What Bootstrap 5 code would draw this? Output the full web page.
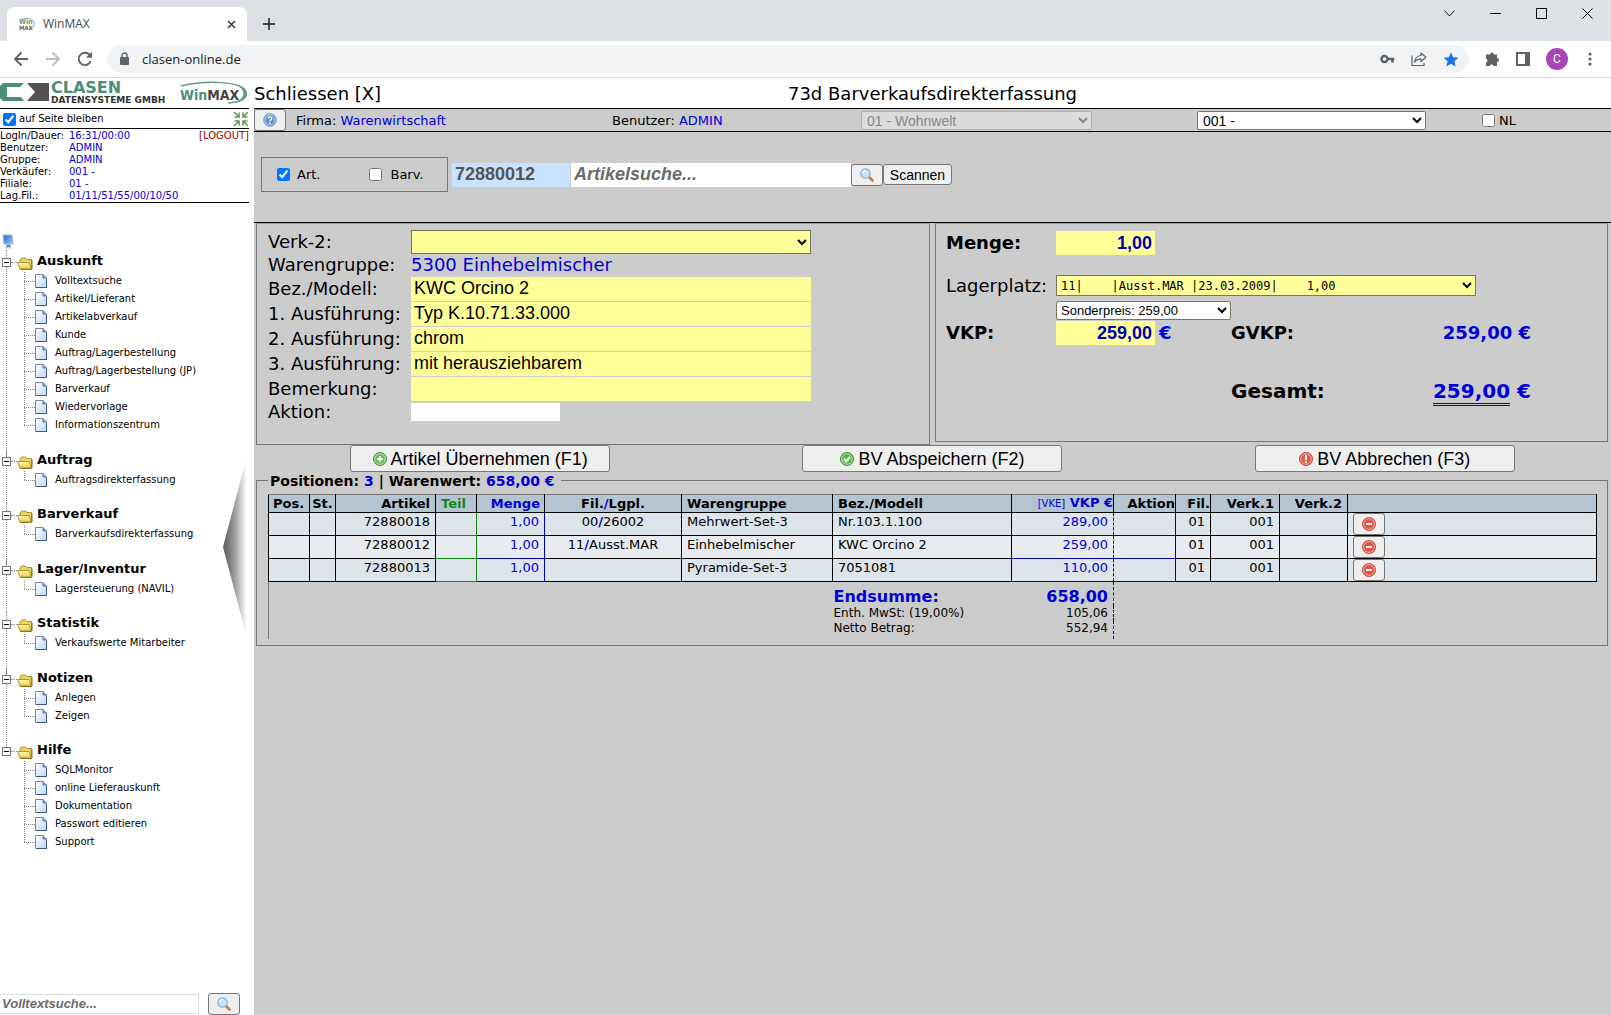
<!DOCTYPE html>
<html lang="de">
<head>
<meta charset="utf-8">
<meta name="viewport" content="width=device-width, initial-scale=1">
<title>WinMAX</title>
<link href="https://cdn.jsdelivr.net/npm/bootstrap@5.3.0/dist/css/bootstrap.min.css" rel="stylesheet">
<style>
  body { font-family: Verdana, "DejaVu Sans", sans-serif; font-size: 13px; line-height: 16px; color: #000; background: #fff; }
  a { color: inherit; text-decoration: none; }
  .blue { color: #0000d8; }
  button, input, select { font-family: Arial, "Liberation Sans", sans-serif; color: #000; }
  input[type=checkbox] { width: 13px; height: 13px; margin: 0; flex: none; }

  /* browser window */
  .tabstrip { height: 41px; background: #dee1e6; padding: 7px 0 0 7px; }
  .tab-card { width: 240px; height: 34px; background: #fff; border-radius: 8px 8px 0 0; padding: 0 11px 0 12px; font: 12px/16px "Open Sans", sans-serif; color: #45494d; }
  .ico-btn { border: 0; background: none; padding: 0; line-height: 0; }
  .toolbar { height: 37px; background: #fff; border-bottom: 1px solid #dadce0; padding: 0 15px 0 13px; }
  .omnibox { height: 28px; border-radius: 14px; background: #f1f3f4; padding: 0 10px 0 12px; margin-left: 14px; font: 13px/20px "Open Sans", sans-serif; color: #202124; }
  .omnibox .lock { margin-right: 12px; }
  .avatar { width: 22px; height: 22px; border-radius: 50%; background: #a846b9; color: #fff; font: 12px/22px Roboto, sans-serif; text-align: center; padding: 0; border: 0; }
  .window-ctl { gap: 35px; padding: 0 18px 22px 0; }

  /* left frame */
  .side { width: 249px; flex: none; }
  .logos { height: 30px; border-bottom: 1px solid #000; box-sizing: content-box; }
  .stay { height: 20px; border-bottom: 1px solid #000; padding: 1px 0 0 3px; gap: 3px; font-size: 10px; }
  .session { font-size: 10px; line-height: 12px; border-bottom: 1px solid #000; padding-top: 1px; }
  .session dt { width: 69px; font-weight: 400; }
  .session dd { margin: 0; }
  .logout { color: #a00000; }
  .tree { margin-top: 31px; font-size: 10px; }
  .tree ul { list-style: none; margin: 0; padding: 0; }
  .grp { position: relative; margin-bottom: 15px; }
  .grp:nth-child(even) { margin-bottom: 14px; }
  .grp:not(:last-child)::before { content: ""; position: absolute; left: 6px; top: 0; bottom: -24px; border-left: 1px dotted #888; }
  .grp-head { height: 22px; font-size: 13px; font-weight: 700; }
  .toggle { position: relative; z-index: 1; width: 9px; height: 9px; margin: 3px 0 0 2px; border: 1px solid #777; background: #fff; padding: 0; flex: none; display: flex; align-items: center; justify-content: center; }
  .toggle::before { content: ""; width: 5px; height: 1px; background: #000; }
  .stub { width: 6px; margin-top: 3px; border-top: 1px dotted #888; }
  .grp-head svg { margin-top: 4px; margin-right: 4px; }
  .kids { position: relative; margin-left: 24px !important; }
  .kids::before { content: ""; position: absolute; left: 0; top: 0; bottom: 9px; border-left: 1px dotted #888; }
  .kids li { height: 18px; display: flex; align-items: center; }
  .kids li::before { content: ""; width: 11px; border-top: 1px dotted #888; }
  .kids svg { margin-right: 8px; }
  .drawer { position: absolute; left: 223px; top: 374px; width: 25px; height: 190px; clip-path: polygon(0 50%, 100% 0, 100% 100%); background: linear-gradient(90deg, #666 10%, #999 45%, #fff 95%); border: 0; padding: 0; }
  .side-find { height: 23px; gap: 9px; }
  .side-find input { width: 199px; height: 20px; border: 1px solid #ddd; border-left: 0; padding: 0 2px; font-size: 13px; font-weight: 700; font-style: italic; }
  ::placeholder { color: #6b6b6b; opacity: 1; }

  /* right frame */
  .work { background: #ccc; min-width: 0; margin-left: 5px; }
  .work-title { height: 31px; padding-top: 2px; background: #fff; border-bottom: 1px solid #000; font-size: 18px; display: grid; grid-template-columns: 1fr auto 1fr; align-items: center; }
  .infobar { height: 23px; border-bottom: 1px solid #000; display: grid; grid-template-columns: 42px 316fr 249fr 336fr 285fr 129fr; align-items: center; }
  .infobar > span { padding-top: 1px; }
  .infobar select { height: 19px; padding: 0 0 0 1px; font-size: 14px; border: 1px solid #767676; border-radius: 2px; background: #fff; }
  .infobar select:disabled { background: #dcdcdc; border-color: #b0b0b0; color: #888; opacity: 1; }
  .sel-house { width: 231px; }
  .sel-seller { width: 229px; }
  .face { background: #efefef; border: 1px solid #767676; border-radius: 3px; padding: 0; display: flex; align-items: center; justify-content: center; }
  .face.tool { width: 32px; height: 22px; }
  .searchrow { height: 91px; padding: 0 0 5px 7px; border-bottom: 1px solid #000; }
  .kind { width: 187px; height: 35px; border: 1px solid #767676; margin-right: 4px; padding-left: 15px; }
  .kind label { margin-left: 7px; }
  .kind .barv { margin-left: 49px; }
  .kind label[for=barv] { margin-left: 8px; }
  .searchrow > input { height: 24px; border: 0; padding: 0 3px; font-size: 18px; font-weight: 700; color: #555; }
  .in-no { width: 118px; background: #c9e2ff; margin-right: 1px; }
  .in-find { width: 280px; font-style: italic; }
  .scan { width: 69px; height: 21px; font-size: 14px; }
  .panels { padding: 0 3px 0 2px; gap: 5px; }
  .pane { border: 1px solid #767676; border-top-color: #999; flex: 1 1 0; min-width: 0; font-size: 18px; }
  .pane-l { height: 222px; padding: 5px 0 0 11px; }
  .pane-r { height: 219px; padding: 7px 0 0 10px; }
  .line { display: grid; grid-template-columns: 143px 400px; height: 25px; align-items: center; }
  .line.tight { height: 22px; }
  .yel { background: #ffff99; border: 0; height: 24px; font-size: 18px; padding: 0 3px; width: 100%; }
  .pane select { border: 1px solid #76765a; }
  .aktion { border: 0; width: 149px; height: 18px; }
  .num { width: 99px; font-weight: 700; text-align: right; color: #0000b0; }
  .stock { display: grid; grid-template-columns: 110px 1fr; align-items: center; }
  .stock .gap-top { margin-top: 20px; }
  .price { display: grid; grid-template-columns: 110px 175px 1fr; margin-right: 76px; align-items: center; height: 26px; }
  .price.total { margin-top: 32px; font-size: 20px; }
  .pane .lager { font-family: "DejaVu Sans Mono", monospace; font-size: 12px; height: 21px; width: 420px; padding: 0; }
  .special { font-size: 13px; height: 19px; width: 175px; background: #fff; padding: 0; border-radius: 2px; margin-top: 5px; }
  .dbl { border-bottom: 3px double #0000d8; }
  .actions { height: 30px; }
  .actions .face { width: 260px; height: 27px; font-size: 18px; gap: 4px; }

  .posbox { position: relative; margin: 5px 3px 0 2px; border: 1px solid #767676; padding: 13px 10px 7px 11px; height: 166px; min-width: 0; }
  .posbox legend { position: absolute; left: 11px; top: -8px; width: auto; margin: 0; padding: 0 6px 0 2px; background: #ccc; font-size: 14px; line-height: 16px; font-weight: 700; float: none; }
  .pos { width: 100%; table-layout: fixed; border-collapse: collapse; border-left: 1px solid #777; }
  .pos th, .pos td { padding: 0 5px; overflow: hidden; white-space: nowrap; }
  .pos thead th { height: 17px; line-height: 16px; background: #b4c4d0; border: 1px solid #000; border-top-color: #777; }
  .pos tbody td { height: 23px; line-height: 17px; vertical-align: top; border: 1px solid #000; background: #dde4ea; }
  .pos tbody tr:nth-child(2) td { background: #e8ebf0; }
  .pos tbody td.g { border-color: #128a12; border-left-color: #000; }
  .pos tbody td.b { border-color: #0000b0; }
  .pos tbody td.v { border-left-color: #000; border-right: 1px dashed #0000b0; border-bottom-color: #0000b0; }
  .pos tbody td.v + td.b { border-left: 1px dashed #0000b0; }
  .pos tbody tr:first-child td { border-top-color: #000; }
  .pos tbody td.act { padding: 0 0 0 5px; }
  .pos tfoot td { font-size: 12px; line-height: 15px; height: 15px; padding-left: 1px; }
  .pos tfoot .sum td { font-size: 16px; line-height: 18px; font-weight: 700; padding-top: 6px; height: 24px; }
  .pos tfoot tr:last-child td { height: 18px; vertical-align: top; }
  .pos tfoot td.tv { border-right: 1px dashed #0000b0; padding-right: 5px; }
  .vke { font-size: 10px; font-weight: 400; }
</style>
</head>
<body class="vh-100 d-flex flex-column overflow-hidden">

<svg class="position-absolute" width="0" height="0" aria-hidden="true">
  <defs>
    <linearGradient id="gd" x1="0" y1="0" x2="1" y2="1"><stop offset="0" stop-color="#fff"/><stop offset="1" stop-color="#bcd6f4"/></linearGradient>
    <linearGradient id="gf" x1="0" y1="0" x2="0" y2="1"><stop offset="0" stop-color="#fff9b8"/><stop offset="1" stop-color="#eec73c"/></linearGradient>
    <linearGradient id="gs" x1="0" y1="0" x2="1" y2="1"><stop offset="0" stop-color="#2a62c0"/><stop offset="1" stop-color="#8fd0fa"/></linearGradient>
  </defs>
  <symbol id="doc" viewBox="0 0 12 14"><path d="M.5.5h7.500l3.500 3.500v9.500H.5z" fill="url(#gd)" stroke="#6d86b5"/><path d="M8 .5V4h3.500" fill="#7d9bd0" stroke="#5b77ad"/><path d="M1 13.500h10.500V5" fill="none" stroke="#3f5684"/></symbol>
  <symbol id="folder" viewBox="0 0 16 13"><path d="M3 3.500 4.500 1h4L10 2.500h4.500v9.500H3z" fill="#f0d25c" stroke="#a8923a"/><path d="M.6 5.500h11.500l2.200 6.800H3z" fill="url(#gf)" stroke="#b0962e" stroke-linejoin="round"/><path d="M14.500 12.300H3.500M15 3.500v8.500" stroke="#7d6c1c" fill="none"/></symbol>
  <symbol id="lens" viewBox="0 0 14 14"><path d="m8.500 8.500 4 4" stroke="#c77b3a" stroke-width="2.600" stroke-linecap="round"/><circle cx="5.500" cy="5.500" r="4.700" fill="#c4e2fa" stroke="#8fb0d6" stroke-width="1.200"/><path d="M3 5a3 3 0 0 1 3-2.500" stroke="#fff" stroke-width="1.200" fill="none"/></symbol>
  <symbol id="minus" viewBox="0 0 14 14"><circle cx="7" cy="7" r="6.600" fill="#e05548" stroke="#c2463c" stroke-width=".8"/><circle cx="7" cy="7" r="5.400" fill="none" stroke="#f6b3aa" stroke-width=".9"/><path d="M4 7h6" stroke="#fff" stroke-width="2"/></symbol>
</svg>

<!-- browser window -->
<header>
  <div class="tabstrip d-flex align-items-center">
    <div class="tab-card d-flex align-items-center">
      <svg width="16" height="16" viewBox="0 0 16 16"><path d="M2 4C8 0 16 3 15 8c0 3-2 5-5 6" fill="none" stroke="#7fb5a0"/><text x="0" y="8" font-family="DejaVu Sans Condensed" font-weight="700" font-size="7" fill="#5a9a82">Win</text><text x="0" y="14" font-family="DejaVu Sans Condensed" font-weight="700" font-size="6" fill="#666">MAX</text></svg>
      <span class="flex-grow-1 ms-2">WinMAX</span>
      <button class="ico-btn" aria-label="Tab schließen"><svg width="9" height="9" viewBox="0 0 9 9"><path d="m1 1 7 7M8 1 1 8" stroke="#3c4043" stroke-width="1.600"/></svg></button>
    </div>
    <button class="ico-btn ms-3" aria-label="Neuer Tab"><svg width="12" height="12" viewBox="0 0 12 12"><path d="M6 0v12M0 6h12" stroke="#3c4043" stroke-width="1.800"/></svg></button>
    <div class="window-ctl d-flex ms-auto align-items-center">
      <button class="ico-btn" aria-label="Tabs suchen"><svg width="11" height="7" viewBox="0 0 11 7"><path d="m.5.5 5 5.500 5-5.500" fill="none" stroke="#222"/></svg></button>
      <button class="ico-btn" aria-label="Minimieren"><svg width="11" height="11" viewBox="0 0 11 11"><path d="M0 5.500h11" stroke="#000"/></svg></button>
      <button class="ico-btn" aria-label="Maximieren"><svg width="11" height="11" viewBox="0 0 11 11"><path d="M.5.500h10v10H.5z" fill="none" stroke="#000"/></svg></button>
      <button class="ico-btn" aria-label="Schließen"><svg width="11" height="11" viewBox="0 0 11 11"><path d="m.5.500 10 10m0-10-10 10" stroke="#000"/></svg></button>
    </div>
  </div>
  <div class="toolbar d-flex align-items-center">
    <button class="ico-btn" aria-label="Zurück"><svg width="16" height="16" viewBox="0 0 16 16"><path d="M15 8H2m6.500-6.500L2 8l6.500 6.500" fill="none" stroke="#5f6368" stroke-width="1.900"/></svg></button>
    <button class="ico-btn ms-3" aria-label="Vorwärts"><svg width="16" height="16" viewBox="0 0 16 16"><path d="M1 8h13M7.500 1.500 14 8l-6.500 6.500" fill="none" stroke="#babcbe" stroke-width="1.900"/></svg></button>
    <button class="ico-btn ms-3" aria-label="Neu laden"><svg width="16" height="16" viewBox="0 0 16 16"><path d="M13.700 10.200A6.200 6.200 0 1 1 12.500 3.700L14 5.300" fill="none" stroke="#5f6368" stroke-width="1.900"/><path d="M15 .8v6H9z" fill="#5f6368"/></svg></button>
    <div class="omnibox d-flex align-items-center flex-grow-1">
      <svg width="11" height="14" viewBox="0 0 11 14" class="lock"><rect x="1" y="5" width="9" height="8" rx="1" fill="#5f6368"/><path d="M3 6V3.500a2.500 2.500 0 0 1 5 0V6" fill="none" stroke="#5f6368" stroke-width="1.400"/></svg>
      <span class="flex-grow-1">clasen-online.de</span>
      <svg width="15" height="10" viewBox="0 0 15 10" class="me-3"><circle cx="4.500" cy="5" r="3" fill="none" stroke="#5f6368" stroke-width="2.400"/><path d="M7.500 5h6.800M12.500 5v3.500" stroke="#5f6368" stroke-width="2.600" fill="none"/></svg>
      <svg width="16" height="14" viewBox="0 0 16 14" class="me-3"><path d="M1 3.500v10h12V11" fill="none" stroke="#5f6368" stroke-width="1.200"/><path d="M10 1v2.500C6 4 4 6 3.500 10 5.500 7.500 7.500 6.800 10 6.800V9.500L15 5.200z" fill="none" stroke="#5f6368" stroke-width="1.200" stroke-linejoin="round"/></svg>
      <svg width="16" height="15" viewBox="0 0 16 15"><path d="m8 .3 2.100 4.900 5.300.5-4 3.500 1.200 5.200L8 11.700l-4.600 2.700 1.200-5.200-4-3.500 5.300-.5z" fill="#1a73e8"/></svg>
    </div>
    <button class="ico-btn ms-3" aria-label="Erweiterungen"><svg width="15" height="15" viewBox="0 0 15 15"><path d="M5 2.500a1.900 1.900 0 0 1 3.800 0H12v3.600a1.900 1.900 0 0 1 0 4V14H8.500a1.900 1.900 0 0 0-3.700 0H1V10.500a1.900 1.900 0 0 0 0-3.700V2.500z" fill="#5f6368"/></svg></button>
    <button class="ico-btn ms-3" aria-label="Seitenleiste"><svg width="14" height="14" viewBox="0 0 14 14"><path d="M1 1h12v12H1z" fill="none" stroke="#5f6368" stroke-width="2"/><path d="M9 1h4v12H9z" fill="#5f6368"/></svg></button>
    <button class="avatar ms-3">C</button>
    <button class="ico-btn ms-3" aria-label="Menü"><svg width="12" height="14" viewBox="0 0 12 14" fill="#5f6368"><circle cx="6" cy="2" r="1.600"/><circle cx="6" cy="7" r="1.600"/><circle cx="6" cy="12" r="1.600"/></svg></button>
  </div>
</header>

<div class="d-flex flex-grow-1 align-items-stretch overflow-hidden">
  <aside class="side d-flex flex-column position-relative">
    <div class="logos">
      <svg class="d-block" width="249" height="30" viewBox="0 0 249 30" role="img" aria-label="Clasen Datensysteme GmbH WinMAX">
        <path d="M3 5h21l-4 4H7v10h14l3 4H3L0 20V8z" fill="#4b8f78"/>
        <path d="M27 5h22v18H27l8-9z" fill="#555054"/>
        <text x="51" y="15" font-family="DejaVu Sans" font-weight="700" font-size="16" fill="#4b8f78">CLASEN</text>
        <text x="51" y="25" font-family="DejaVu Sans" font-weight="700" font-size="9" fill="#333">DATENSYSTEME GMBH</text>
        <path d="M181 8C205 2 243 3 246 14c2 7-6 10-18 11" fill="none" stroke="#5f9c88" stroke-width="1.500"/>
        <path d="M234 6c14 3 18 12 6 16 6-6 4-12-6-16z" fill="#5f9c88"/>
        <text x="180" y="22" font-family="DejaVu Sans Condensed" font-weight="700" font-size="14" fill="#4b8f78">Win<tspan fill="#444">MAX</tspan></text>
      </svg>
    </div>
    <div class="stay d-flex align-items-center">
      <input type="checkbox" id="stay" checked><label for="stay" class="flex-grow-1">auf Seite bleiben</label>
      <svg width="16" height="16" viewBox="0 0 16 16" fill="none" stroke="#5c9a50" stroke-width="1.600"><path d="m1 1 4 4M6 1.500V6H1.500M15 1l-4 4M10 1.500V6h4.500M1 15l4-4M6 14.500V10H1.500M15 15l-4-4M10 14.500V10h4.500"/></svg>
    </div>
    <dl class="session m-0">
      <div class="d-flex"><dt>LogIn/Dauer:</dt><dd class="blue flex-grow-1">16:31/00:00</dd><dd><a class="logout" href="#">[LOGOUT]</a></dd></div>
      <div class="d-flex"><dt>Benutzer:</dt><dd class="blue">ADMIN</dd></div>
      <div class="d-flex"><dt>Gruppe:</dt><dd class="blue">ADMIN</dd></div>
      <div class="d-flex"><dt>Verkäufer:</dt><dd class="blue">001 -</dd></div>
      <div class="d-flex"><dt>Filiale:</dt><dd class="blue">01 -</dd></div>
      <div class="d-flex"><dt>Lag.Fil.:</dt><dd class="blue">01/11/51/55/00/10/50</dd></div>
    </dl>

    <nav class="tree" aria-label="Menü">
      <svg class="d-block" width="16" height="16" viewBox="0 0 16 16"><path d="M3 1h9l1 9H4z" fill="url(#gs)" stroke="#9db7d8"/><path d="m6 11 4-.5 1 2.500-4 1z" fill="#5b86c4"/><path d="m5 13 6-.5.500 2H6z" fill="#bccbdc"/></svg>
      <ul>
        <li class="grp"><div class="grp-head d-flex align-items-center"><button class="toggle" aria-label="Zuklappen"></button><span class="stub"></span><svg width="16" height="13"><use href="#folder"/></svg><span>Auskunft</span></div>
          <ul class="kids">
            <li><svg width="12" height="14"><use href="#doc"/></svg><a href="#">Volltextsuche</a></li>
            <li><svg width="12" height="14"><use href="#doc"/></svg><a href="#">Artikel/Lieferant</a></li>
            <li><svg width="12" height="14"><use href="#doc"/></svg><a href="#">Artikelabverkauf</a></li>
            <li><svg width="12" height="14"><use href="#doc"/></svg><a href="#">Kunde</a></li>
            <li><svg width="12" height="14"><use href="#doc"/></svg><a href="#">Auftrag/Lagerbestellung</a></li>
            <li><svg width="12" height="14"><use href="#doc"/></svg><a href="#">Auftrag/Lagerbestellung (JP)</a></li>
            <li><svg width="12" height="14"><use href="#doc"/></svg><a href="#">Barverkauf</a></li>
            <li><svg width="12" height="14"><use href="#doc"/></svg><a href="#">Wiedervorlage</a></li>
            <li><svg width="12" height="14"><use href="#doc"/></svg><a href="#">Informationszentrum</a></li>
          </ul></li>
        <li class="grp"><div class="grp-head d-flex align-items-center"><button class="toggle" aria-label="Zuklappen"></button><span class="stub"></span><svg width="16" height="13"><use href="#folder"/></svg><span>Auftrag</span></div>
          <ul class="kids">
            <li><svg width="12" height="14"><use href="#doc"/></svg><a href="#">Auftragsdirekterfassung</a></li>
          </ul></li>
        <li class="grp"><div class="grp-head d-flex align-items-center"><button class="toggle" aria-label="Zuklappen"></button><span class="stub"></span><svg width="16" height="13"><use href="#folder"/></svg><span>Barverkauf</span></div>
          <ul class="kids">
            <li><svg width="12" height="14"><use href="#doc"/></svg><a href="#">Barverkaufsdirekterfassung</a></li>
          </ul></li>
        <li class="grp"><div class="grp-head d-flex align-items-center"><button class="toggle" aria-label="Zuklappen"></button><span class="stub"></span><svg width="16" height="13"><use href="#folder"/></svg><span>Lager/Inventur</span></div>
          <ul class="kids">
            <li><svg width="12" height="14"><use href="#doc"/></svg><a href="#">Lagersteuerung (NAVIL)</a></li>
          </ul></li>
        <li class="grp"><div class="grp-head d-flex align-items-center"><button class="toggle" aria-label="Zuklappen"></button><span class="stub"></span><svg width="16" height="13"><use href="#folder"/></svg><span>Statistik</span></div>
          <ul class="kids">
            <li><svg width="12" height="14"><use href="#doc"/></svg><a href="#">Verkaufswerte Mitarbeiter</a></li>
          </ul></li>
        <li class="grp"><div class="grp-head d-flex align-items-center"><button class="toggle" aria-label="Zuklappen"></button><span class="stub"></span><svg width="16" height="13"><use href="#folder"/></svg><span>Notizen</span></div>
          <ul class="kids">
            <li><svg width="12" height="14"><use href="#doc"/></svg><a href="#">Anlegen</a></li>
            <li><svg width="12" height="14"><use href="#doc"/></svg><a href="#">Zeigen</a></li>
          </ul></li>
        <li class="grp"><div class="grp-head d-flex align-items-center"><button class="toggle" aria-label="Zuklappen"></button><span class="stub"></span><svg width="16" height="13"><use href="#folder"/></svg><span>Hilfe</span></div>
          <ul class="kids">
            <li><svg width="12" height="14"><use href="#doc"/></svg><a href="#">SQLMonitor</a></li>
            <li><svg width="12" height="14"><use href="#doc"/></svg><a href="#">online Lieferauskunft</a></li>
            <li><svg width="12" height="14"><use href="#doc"/></svg><a href="#">Dokumentation</a></li>
            <li><svg width="12" height="14"><use href="#doc"/></svg><a href="#">Passwort editieren</a></li>
            <li><svg width="12" height="14"><use href="#doc"/></svg><a href="#">Support</a></li>
          </ul></li>
      </ul>
    </nav>
    <button class="drawer" aria-label="Menü einklappen"></button>
    <form class="side-find d-flex align-items-center mt-auto">
      <input type="text" placeholder="Volltextsuche..." aria-label="Volltextsuche">
      <button type="button" class="face tool" aria-label="Suchen"><svg width="14" height="14"><use href="#lens"/></svg></button>
    </form>
  </aside>

  <main class="work flex-grow-1">
    <div class="work-title"><a href="#">Schliessen [X]</a><span>73d Barverkaufsdirekterfassung</span></div>
    <div class="infobar">
      <button class="face tool" aria-label="Hilfe"><svg width="14" height="14" viewBox="0 0 14 14"><circle cx="7" cy="7" r="6.300" fill="#5b93cf" stroke="#7f9fc4"/><circle cx="7" cy="7" r="5.100" fill="none" stroke="#d5e6f7" stroke-width=".8"/><path d="M5.200 5.500c0-2.200 3.600-2.200 3.600 0C8.800 6.800 7 6.800 7 8.300M7 9.300v1.500" fill="none" stroke="#fff" stroke-width="1.400"/></svg></button>
      <span>Firma: <span class="blue">Warenwirtschaft</span></span>
      <span>Benutzer: <span class="blue">ADMIN</span></span>
      <select class="sel-house" disabled aria-label="Haus"><option>01 - Wohnwelt</option></select>
      <select class="sel-seller" aria-label="Verkäufer"><option>001 -</option></select>
      <span class="d-flex align-items-center gap-1"><input type="checkbox" id="nl"><label for="nl">NL</label></span>
    </div>

    <form class="searchrow d-flex align-items-center">
      <div class="kind d-flex align-items-center">
        <input type="checkbox" id="art" checked><label for="art">Art.</label>
        <input type="checkbox" id="barv" class="barv"><label for="barv">Barv.</label>
      </div>
      <input class="in-no" type="text" value="72880012" aria-label="Artikelnummer">
      <input class="in-find" type="text" placeholder="Artikelsuche..." aria-label="Artikelsuche">
      <button type="button" class="face tool" aria-label="Suchen"><svg width="14" height="14"><use href="#lens"/></svg></button>
      <button type="button" class="face scan">Scannen</button>
    </form>

    <div class="panels d-flex align-items-start">
      <section class="pane pane-l">
        <div class="line"><label for="v2">Verk-2:</label><select id="v2" class="yel"><option></option></select></div>
        <div class="line tight"><span>Warengruppe:</span><span class="blue">5300 Einhebelmischer</span></div>
        <div class="line"><label for="bez">Bez./Modell:</label><input id="bez" class="yel" value="KWC Orcino 2"></div>
        <div class="line"><label for="a1">1. Ausführung:</label><input id="a1" class="yel" value="Typ K.10.71.33.000"></div>
        <div class="line"><label for="a2">2. Ausführung:</label><input id="a2" class="yel" value="chrom"></div>
        <div class="line"><label for="a3">3. Ausführung:</label><input id="a3" class="yel" value="mit herausziehbarem"></div>
        <div class="line"><label for="bem">Bemerkung:</label><input id="bem" class="yel"></div>
        <div class="line tight"><label for="akt">Aktion:</label><input id="akt" class="aktion"></div>
      </section>
      <section class="pane pane-r">
        <div class="stock">
          <label for="menge" class="fw-bold">Menge:</label>
          <input id="menge" class="yel num" value="1,00">
          <label for="lager" class="gap-top">Lagerplatz:</label>
          <select id="lager" class="yel lager gap-top"><option>11|&nbsp;&nbsp;&nbsp;&nbsp;|Ausst.MAR&nbsp;|23.03.2009|&nbsp;&nbsp;&nbsp;&nbsp;1,00</option></select>
          <span></span>
          <select class="special" aria-label="Preisart"><option>Sonderpreis: 259,00</option></select>
        </div>
        <div class="price fw-bold">
          <label for="vkp">VKP:</label>
          <span class="d-flex align-items-center gap-1"><input id="vkp" class="yel num" value="259,00"><span class="blue">€</span></span>
          <span class="d-flex justify-content-between"><span>GVKP:</span><span class="blue">259,00 €</span></span>
        </div>
        <div class="price total fw-bold">
          <span></span><span></span>
          <span class="d-flex justify-content-between"><span>Gesamt:</span><span class="blue"><span class="dbl">259,00</span> €</span></span>
        </div>
      </section>
    </div>

    <div class="actions row g-0">
      <div class="col-4 d-flex justify-content-center"><button class="face"><svg width="14" height="14" viewBox="0 0 14 14"><circle cx="7" cy="7" r="6.500" fill="#6cb85c" stroke="#4a9440"/><circle cx="7" cy="7" r="5.300" fill="none" stroke="#c9e8c1" stroke-width=".8"/><path d="M7 4v6M4 7h6" stroke="#fff" stroke-width="2"/></svg>Artikel Übernehmen (F1)</button></div>
      <div class="col-4 d-flex justify-content-center"><button class="face"><svg width="14" height="14" viewBox="0 0 14 14"><circle cx="7" cy="7" r="6.500" fill="#5cb84c" stroke="#3f8f36"/><circle cx="7" cy="7" r="5.300" fill="none" stroke="#c9e8c1" stroke-width=".8"/><path d="m4 7 2.200 2.300L10 5" fill="none" stroke="#fff" stroke-width="2"/></svg>BV Abspeichern (F2)</button></div>
      <div class="col-4 d-flex justify-content-center"><button class="face"><svg width="14" height="14" viewBox="0 0 14 14"><circle cx="7" cy="7" r="6.500" fill="#e05a4c" stroke="#c2463c"/><circle cx="7" cy="7" r="5.300" fill="none" stroke="#f6c3ba" stroke-width=".8"/><path d="M7 3v5M7 9.200v1.800" stroke="#fff" stroke-width="2"/></svg>BV Abbrechen (F3)</button></div>
    </div>

    <fieldset class="posbox">
      <legend>Positionen: <span class="blue">3</span> | Warenwert: <span class="blue">658,00 €</span></legend>
      <table class="pos">
        <colgroup><col style="width:41px"><col style="width:26px"><col style="width:100px"><col style="width:41px"><col style="width:68px"><col style="width:137px"><col style="width:151px"><col style="width:179px"><col style="width:102px"><col style="width:62px"><col style="width:35px"><col style="width:69px"><col style="width:68px"><col></colgroup>
        <thead><tr><th class="px-1">Pos.</th><th class="px-0 text-center">St.</th><th class="text-end">Artikel</th><th style="color:#128a12">Teil</th><th class="text-end blue px-1">Menge</th><th class="text-center">Fil.<span class="blue">/</span>Lgpl.</th><th>Warengruppe</th><th>Bez./Modell</th><th class="text-end blue px-0"><span class="vke">[VKE]</span> VKP €</th><th class="text-end px-0">Aktion</th><th class="text-end px-0">Fil.</th><th class="text-end">Verk.1</th><th class="text-end">Verk.2</th><th></th></tr></thead>
        <tbody>
          <tr><td></td><td></td><td class="text-end">72880018</td><td class="g"></td><td class="b text-end blue">1,00</td><td class="text-center">00<b class="blue">/</b>26002</td><td>Mehrwert-Set-3</td><td>Nr.103.1.100</td><td class="v text-end blue">289,00</td><td class="b"></td><td class="text-end">01</td><td class="text-end">001</td><td></td><td class="act"><button class="face tool" aria-label="Löschen"><svg width="14" height="14"><use href="#minus"/></svg></button></td></tr>
          <tr><td></td><td></td><td class="text-end">72880012</td><td class="g"></td><td class="b text-end blue">1,00</td><td class="text-center">11<b class="blue">/</b>Ausst.MAR</td><td>Einhebelmischer</td><td>KWC Orcino 2</td><td class="v text-end blue">259,00</td><td class="b"></td><td class="text-end">01</td><td class="text-end">001</td><td></td><td class="act"><button class="face tool" aria-label="Löschen"><svg width="14" height="14"><use href="#minus"/></svg></button></td></tr>
          <tr><td></td><td></td><td class="text-end">72880013</td><td class="g"></td><td class="b text-end blue">1,00</td><td></td><td>Pyramide-Set-3</td><td>7051081</td><td class="v text-end blue">110,00</td><td class="b"></td><td class="text-end">01</td><td class="text-end">001</td><td></td><td class="act"><button class="face tool" aria-label="Löschen"><svg width="14" height="14"><use href="#minus"/></svg></button></td></tr>
        </tbody>
        <tfoot>
          <tr class="sum"><td colspan="7"></td><td class="blue">Endsumme:</td><td class="tv text-end blue">658,00</td><td colspan="5"></td></tr>
          <tr><td colspan="7"></td><td>Enth. MwSt: (19,00%)</td><td class="tv text-end">105,06</td><td colspan="5"></td></tr>
          <tr><td colspan="7"></td><td>Netto Betrag:</td><td class="tv text-end">552,94</td><td colspan="5"></td></tr>
        </tfoot>
      </table>
    </fieldset>
  </main>
</div>
<script src="https://cdn.jsdelivr.net/npm/bootstrap@5.3.0/dist/js/bootstrap.bundle.min.js"></script>
</body>
</html>
